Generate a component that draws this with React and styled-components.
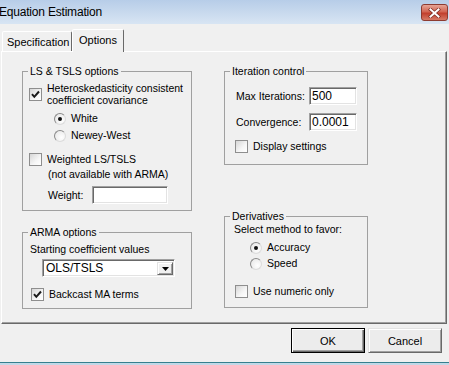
import React from 'react';
import styled, { createGlobalStyle } from 'styled-components';

const GlobalStyle = createGlobalStyle`
  html, body {
    margin: 0;
    padding: 0;
    background: #f0f0f0;
    overflow: hidden;
  }
  body {
    font-family: "Liberation Sans", Arial, sans-serif;
    font-size: 10.5px;
    color: #000;
  }
`;

const Window = styled.div`
  width: 449px;
  height: 365px;
  display: flex;
  flex-direction: column;
  background: #f0f0f0;
`;

const TitleBar = styled.div`
  height: 24px;
  flex-shrink: 0;
  display: flex;
  align-items: flex-start;
  justify-content: space-between;
  padding-right: 1px;
  box-sizing: border-box;
  background: linear-gradient(#b7cde8, #d8e5f3);
`;

const TitleText = styled.div`
  margin: 5px 0 0 -1px;
  font-size: 12px;
  line-height: 15px;
  letter-spacing: -0.2px;
`;

const CloseButton = styled.div`
  margin-top: 4px;
  width: 27px;
  height: 17px;
  box-sizing: border-box;
  border: 1px solid #8d3b31;
  border-radius: 3px;
  background: linear-gradient(#e6a596, #d26552 45%, #c23f2d 55%, #d67a66);
  display: flex;
  align-items: center;
  justify-content: center;
`;

const Body = styled.div`
  flex: 1;
  display: flex;
  flex-direction: column;
`;

const TabStrip = styled.div`
  height: 27px;
  flex-shrink: 0;
  display: flex;
  align-items: flex-end;
  padding-left: 2px;
  box-sizing: border-box;
  position: relative;
  z-index: 1;
`;

const Tab = styled.div`
  box-sizing: border-box;
  width: ${(p) => p.$w}px;
  height: ${(p) => (p.$active ? 23 : 20)}px;
  margin-bottom: ${(p) => (p.$active ? -1 : 0)}px;
  padding: 4px 0 0 ${(p) => p.$pl}px;
  border: 1px solid;
  border-bottom: none;
  border-color: #fff #696969 transparent #fff;
  border-radius: 2px 2px 0 0;
  background: #f0f0f0;
  font-size: 11px;
  line-height: 13px;
  white-space: nowrap;
`;

const Panel = styled.div`
  box-sizing: border-box;
  height: 273px;
  flex-shrink: 0;
  margin: 0 2px 0 1px;
  border: 1px solid;
  border-color: #fff #696969 #696969 #fff;
  box-shadow: inset -1px -1px #a0a0a0;
  display: flex;
  gap: 32px;
  padding: 13px 0 0 20px;
`;

const Column = styled.div`
  display: flex;
  flex-direction: column;
  gap: ${(p) => p.$gap}px;
`;

const Group = styled.fieldset`
  box-sizing: border-box;
  margin: 0;
  padding: 0;
  min-width: 0;
  width: ${(p) => p.$w}px;
  height: ${(p) => p.$h}px;
  border: 1px solid #a0a0a0;
`;

const Legend = styled.legend`
  padding: 0 2px;
  margin-left: 5px;
  line-height: 13px;
`;

const Content = styled.div`
  display: flex;
  flex-direction: column;
  align-items: flex-start;
  padding-left: ${(p) => p.$pl}px;
`;

const Row = styled.div`
  display: flex;
  align-items: center;
  gap: 5px;
  min-height: 13px;
  margin-top: ${(p) => p.$mt || 0}px;
  margin-left: ${(p) => p.$ml || 0}px;
  line-height: ${(p) => p.$lh || 13}px;
  white-space: nowrap;
`;

const Text = styled.div`
  margin-top: ${(p) => p.$mt || 0}px;
  margin-left: ${(p) => p.$ml || 0}px;
  line-height: 13px;
  white-space: nowrap;
`;

const CheckBox = styled.div`
  width: 13px;
  height: 13px;
  flex-shrink: 0;
  box-sizing: border-box;
  border: 1px solid #8e8e8e;
  background: linear-gradient(135deg, #d6d6d6, #f6f6f6 60%, #fff);
  display: flex;
  align-items: center;
  justify-content: center;
`;

const Radio = styled.div`
  width: 12px;
  height: 12px;
  flex-shrink: 0;
  box-sizing: border-box;
  border-radius: 50%;
  border: 1px solid;
  border-color: #8a8a8a #dcdcdc #dcdcdc #8a8a8a;
  background: radial-gradient(circle at 65% 65%, #fff, #e4e4e4);
  display: flex;
  align-items: center;
  justify-content: center;

  &::after {
    content: '';
    width: 4px;
    height: 4px;
    border-radius: 50%;
    background: #111;
    display: ${(p) => (p.$on ? 'block' : 'none')};
  }
`;

const FieldRow = styled.div`
  display: flex;
  align-items: center;
  margin-top: ${(p) => p.$mt || 0}px;
  margin-left: ${(p) => p.$ml || 0}px;
`;

const FieldLabel = styled.div`
  width: ${(p) => p.$w}px;
  line-height: 13px;
  white-space: nowrap;
`;

const TextBox = styled.input`
  box-sizing: border-box;
  width: ${(p) => p.$w}px;
  height: 18px;
  margin: 0;
  padding: 0 0 0 2px;
  border: 1px solid;
  border-color: #a0a0a0 #fff #fff #a0a0a0;
  box-shadow: inset 1px 1px #696969, inset -1px -1px #e3e3e3;
  background: #fff;
  font-family: "Liberation Sans", Arial, sans-serif;
  font-size: 12px;
  color: #000;
  outline: none;
`;

const Select = styled.div`
  box-sizing: border-box;
  width: 133px;
  height: 18px;
  margin-top: ${(p) => p.$mt}px;
  margin-left: ${(p) => p.$ml}px;
  padding: 2px 1px 1px 2px;
  border: 1px solid;
  border-color: #a0a0a0 #fff #fff #a0a0a0;
  box-shadow: inset 1px 1px #696969, inset -1px -1px #e3e3e3;
  background: #fff;
  display: flex;
  align-items: stretch;
`;

const SelectValue = styled.div`
  flex: 1;
  padding-left: 1px;
  font-size: 12px;
  line-height: 13px;
`;

const ArrowButton = styled.div`
  width: 16px;
  box-sizing: border-box;
  border: 1px solid;
  border-color: #e3e3e3 #696969 #696969 #e3e3e3;
  box-shadow: inset 1px 1px #fff, inset -1px -1px #a0a0a0;
  background: #f0f0f0;
  display: flex;
  align-items: center;
  justify-content: center;
`;

const Footer = styled.div`
  flex: 1;
  display: flex;
  justify-content: flex-end;
  align-items: flex-start;
  gap: 3px;
  padding: 4px 7px 0 0;
`;

const Button = styled.div`
  width: 74px;
  height: 25px;
  box-sizing: border-box;
  border: 1px solid;
  border-color: ${(p) => (p.$default ? '#000' : '#e3e3e3 #696969 #696969 #e3e3e3')};
  box-shadow: ${(p) =>
    p.$default
      ? 'inset 1px 1px #fff, inset -1px -1px #696969, inset -2px -2px #a0a0a0'
      : 'inset 1px 1px #fff, inset -1px -1px #a0a0a0'};
  background: #ececec;
  display: flex;
  align-items: center;
  justify-content: center;
  font-size: 11px;
`;

const FrameEdge = styled.div`
  height: 3px;
  flex-shrink: 0;
  border-top: 1px solid #367f8e;
  box-sizing: border-box;
  background: #c2d8e7;
`;

const Check = ({ on }) => (
  <CheckBox>
    {on && (
      <svg width="11" height="11" viewBox="0 0 11 11">
        <path d="M2 5.2 L4.3 7.8 L9 2.5" fill="none" stroke="#1a1a1a" strokeWidth="2" />
      </svg>
    )}
  </CheckBox>
);

export default function App() {
  return (
    <Window>
      <GlobalStyle />
      <TitleBar>
        <TitleText>Equation Estimation</TitleText>
        <CloseButton>
          <svg width="13" height="10" viewBox="0 0 13 10">
            <path d="M2.5 1.5 L10.5 8.5 M10.5 1.5 L2.5 8.5" stroke="#7a2a20" strokeWidth="3.4" strokeLinecap="square" />
            <path d="M2.5 1.5 L10.5 8.5 M10.5 1.5 L2.5 8.5" stroke="#fff" strokeWidth="2" strokeLinecap="square" />
          </svg>
        </CloseButton>
      </TitleBar>

      <Body>
        <TabStrip>
          <Tab $w={70} $pl={4}>Specification</Tab>
          <Tab $w={52} $pl={6} $active>Options</Tab>
        </TabStrip>

        <Panel>
          <Column $gap={15}>
            <Group $w={170} $h={146}>
              <Legend>LS &amp; TSLS options</Legend>
              <Content $pl={6}>
                <Row $mt={4} $lh={12}>
                  <Check on />
                  <div>
                    Heteroskedasticity consistent
                    <br />
                    coefficient covariance
                  </div>
                </Row>
                <Row $mt={6} $ml={25}>
                  <Radio $on />
                  White
                </Row>
                <Row $mt={4} $ml={25}>
                  <Radio />
                  Newey-West
                </Row>
                <Row $mt={11}>
                  <Check />
                  Weighted LS/TSLS
                </Row>
                <Text $mt={2} $ml={19}>(not available with ARMA)</Text>
                <FieldRow $mt={5} $ml={19}>
                  <FieldLabel $w={44}>Weight:</FieldLabel>
                  <TextBox $w={76} readOnly defaultValue="" />
                </FieldRow>
              </Content>
            </Group>

            <Group $w={170} $h={83}>
              <Legend>ARMA options</Legend>
              <Content $pl={7}>
                <Text $mt={4}>Starting coefficient values</Text>
                <Select $mt={3} $ml={12}>
                  <SelectValue>OLS/TSLS</SelectValue>
                  <ArrowButton>
                    <svg width="7" height="4" viewBox="0 0 7 4">
                      <path d="M0 0 H7 L3.5 4 Z" fill="#000" />
                    </svg>
                  </ArrowButton>
                </Select>
                <Row $mt={11} $ml={1}>
                  <Check on />
                  Backcast MA terms
                </Row>
              </Content>
            </Group>
          </Column>

          <Column $gap={45}>
            <Group $w={144} $h={100}>
              <Legend>Iteration control</Legend>
              <Content $pl={11}>
                <FieldRow $mt={9}>
                  <FieldLabel $w={73}>Max Iterations:</FieldLabel>
                  <TextBox $w={48} readOnly defaultValue="500" />
                </FieldRow>
                <FieldRow $mt={8}>
                  <FieldLabel $w={73}>Convergence:</FieldLabel>
                  <TextBox $w={48} readOnly defaultValue="0.0001" />
                </FieldRow>
                <Row $mt={9} $ml={-1}>
                  <Check />
                  Display settings
                </Row>
              </Content>
            </Group>

            <Group $w={144} $h={98}>
              <Legend>Derivatives</Legend>
              <Content $pl={9}>
                <Text>Select method to favor:</Text>
                <Row $mt={5} $ml={16}>
                  <Radio $on />
                  Accuracy
                </Row>
                <Row $mt={3} $ml={16}>
                  <Radio />
                  Speed
                </Row>
                <Row $mt={15} $ml={1}>
                  <Check />
                  Use numeric only
                </Row>
              </Content>
            </Group>
          </Column>
        </Panel>

        <Footer>
          <Button $default>OK</Button>
          <Button>Cancel</Button>
        </Footer>
      </Body>
      <FrameEdge />
    </Window>
  );
}
